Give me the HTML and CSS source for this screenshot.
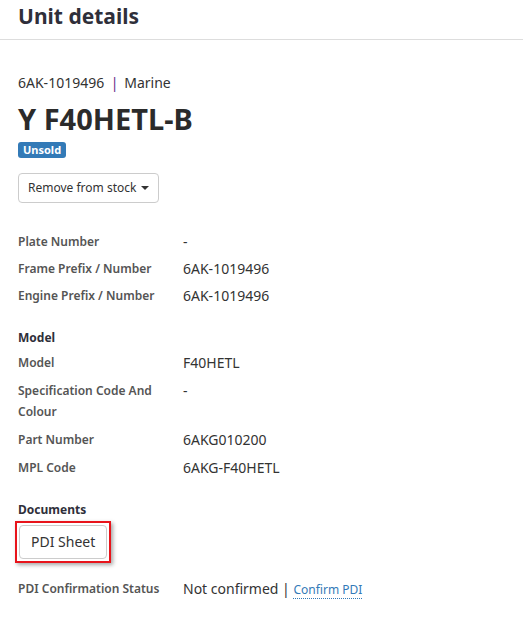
FILE: index.html
```html
<!DOCTYPE html>
<html>
<head>
<meta charset="utf-8">
<link rel="stylesheet" href="styles.css">
</head>
<body>
<header class="page-header">
  <h1 class="page-title">Unit details</h1>
</header>
<main class="content">
  <div class="subline">6AK-1019496 <span class="sep">|</span> Marine</div>
  <h2 class="unit-name">Y F40HETL-B</h2>
  <span class="badge">Unsold</span>
  <div class="actions">
    <button class="btn btn-sm">Remove from stock <span class="caret"></span></button>
  </div>

  <dl class="details first">
    <div class="row"><dt>Plate Number</dt><dd>-</dd></div>
    <div class="row"><dt>Frame Prefix / Number</dt><dd>6AK-1019496</dd></div>
    <div class="row"><dt>Engine Prefix / Number</dt><dd>6AK-1019496</dd></div>
  </dl>

  <h3 class="section-title model">Model</h3>
  <dl class="details loose">
    <div class="row"><dt>Model</dt><dd>F40HETL</dd></div>
    <div class="row"><dt>Specification Code And Colour</dt><dd>-</dd></div>
    <div class="row"><dt>Part Number</dt><dd>6AKG010200</dd></div>
    <div class="row"><dt>MPL Code</dt><dd>6AKG-F40HETL</dd></div>
  </dl>

  <h3 class="section-title docs">Documents</h3>
  <div class="highlight"><button class="btn btn-doc">PDI Sheet</button></div>

  <dl class="details status">
    <div class="row"><dt>PDI Confirmation Status</dt><dd>Not confirmed | <a class="link" href="#">Confirm PDI</a></dd></div>
  </dl>
</main>
</body>
</html>
```
FILE: styles.css
```css
* { box-sizing: border-box; }
body {
  margin: 0;
  font-family: "Noto Sans", "Open Sans", sans-serif;
  color: #333;
  background: #fff;
  font-size: 14px;
  line-height: 1.42857;
}
.page-header {
  height: 40px;
  border-bottom: 1px solid #ddd;
  padding: 0 18px;
  display: flex;
  align-items: center;
}
.page-title {
  margin: 0;
  font-size: 21px;
  font-weight: 700;
  color: #2f2f3a;
  line-height: 1;
  margin-top: -6px;
}
.content {
  padding: 33px 18px 0;
}
.subline {
  font-size: 14px;
  line-height: 20px;
  color: #333;
}
.sep { color: #6a2c86; margin: 0 2px 0 3px; }
.unit-name {
  margin: 10px 0 0;
  font-size: 29px;
  line-height: 32px;
  font-weight: 700;
  color: #2b2b2b;
}
.badge {
  display: inline-block;
  margin-top: 7px;
  background: #337ab7;
  color: #fff;
  font-size: 11px;
  font-weight: 700;
  line-height: 12px;
  padding: 2px 5px 2px;
  border-radius: 3px;
}
.actions { margin-top: 14px; }
.btn {
  font-family: inherit;
  background: #fff;
  border: 1px solid #ccc;
  border-radius: 4px;
  color: #333;
  cursor: pointer;
}
.btn-sm {
  font-size: 12px;
  line-height: 18px;
  padding: 5px 9px;
  height: 30px;
  white-space: nowrap;
  display: inline-flex;
  align-items: center;
}
.caret {
  display: inline-block;
  width: 0; height: 0;
  border-left: 4px solid transparent;
  border-right: 4px solid transparent;
  border-top: 4px solid #333;
  margin-left: 5px;
}
.details { margin: 0; }
.details.first { margin-top: 28px; }
.row {
  display: grid;
  grid-template-columns: 165px 1fr;
  padding-bottom: 6px;
}
.loose .row { padding-bottom: 7px; }
dt {
  font-size: 12px;
  font-weight: 600;
  color: #555;
  line-height: 21px;
  padding-right: 10px;
}
dd {
  margin: 0;
  font-size: 14px;
  line-height: 21px;
  color: #333;
}
.section-title {
  margin: 15px 0 5px;
  font-size: 12px;
  font-weight: 700;
  color: #2f2f3a;
  line-height: 21px;
}
.section-title.model { margin-bottom: 4px; }
.section-title.docs { margin-top: 14px; margin-bottom: 1px; }
.highlight {
  display: inline-block;
  margin-left: -3px;
  border: 2px solid #e8141b;
  padding: 2px;
  box-shadow: 2px 2px 4px rgba(0,0,0,0.35);
}
.btn-doc {
  display: block;
  font-size: 14px;
  line-height: 20px;
  padding: 6px 11px;
  height: 34px;
}
.status { margin-top: 15px; }
.link {
  color: #337ab7;
  font-size: 12px;
  text-decoration: none;
  border-bottom: 1px dotted #337ab7;
}
```
